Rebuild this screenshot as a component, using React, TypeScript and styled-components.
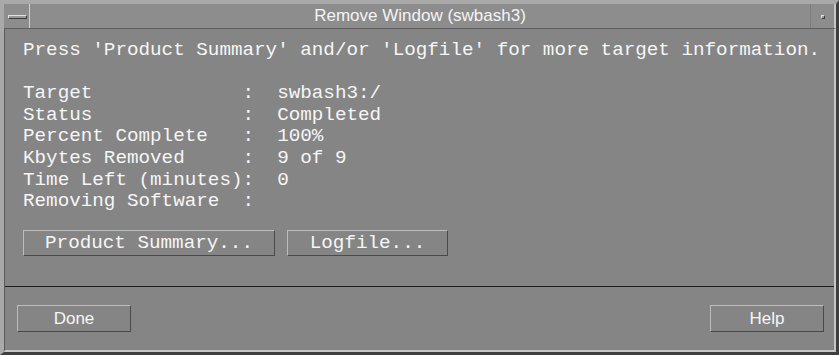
import React from "react";
import styled, { createGlobalStyle } from "styled-components";

const GlobalStyle = createGlobalStyle`
  html, body { margin: 0; padding: 0; background: #858585; }
  body { width: 839px; height: 355px; overflow: hidden; }
  * { -webkit-font-smoothing: none; }
`;

const Frame = styled.div`
  box-sizing: border-box;
  width: 839px;
  height: 355px;
  display: flex;
  flex-direction: column;
  border-style: solid;
  border-width: 4px 3px 3px 4px;
  border-color: #a9a9a9 #3e3e3e #3e3e3e #a9a9a9;
  background: #858585;
`;

const TitleBar = styled.div`
  flex: none;
  display: flex;
  height: 24px;
  background: #8d8d8d;
  border-right: 2px solid #c6c6c6;
  border-bottom: 1px solid #5e5e5e;
`;

const MenuButton = styled.div`
  width: 25px;
  border-right: 1px solid #d0d0d0;
  display: flex;
  align-items: center;
  justify-content: center;
  padding-top: 1px;
  box-sizing: content-box;
`;

const MenuBar = styled.div`
  box-sizing: border-box;
  width: 19px;
  height: 4px;
  margin-left: 1px;
  background: #9a9a9a;
  border-style: solid;
  border-width: 1px;
  border-color: #e2e2e2 #3c3c3c #3c3c3c #e2e2e2;
`;

const Title = styled.div`
  flex: 1;
  text-align: center;
  line-height: 24px;
  font-family: "Liberation Sans", Arial, sans-serif;
  font-size: 17px;
  color: #f4f4f4;
  white-space: nowrap;
`;

const MaxButton = styled.div`
  width: 23px;
  border-left: 1px solid #7c7c7c;
  display: flex;
  align-items: center;
  justify-content: center;
  padding-top: 1px;
`;

const MaxSquare = styled.div`
  box-sizing: border-box;
  width: 4px;
  height: 4px;
  margin-left: 1px;
  background: #9a9a9a;
  border-style: solid;
  border-width: 1px;
  border-color: #e2e2e2 #3c3c3c #3c3c3c #e2e2e2;
`;

const Client = styled.div`
  flex: 1;
  display: flex;
  flex-direction: column;
  border-left: 1px solid #5a5a5a;
  border-right: 2px solid #c6c6c6;
  border-bottom: 2px solid #c6c6c6;
`;

const Upper = styled.div`
  flex: 1;
  padding: 11px 0 0 18px;
  font-family: "Liberation Mono", "Courier New", monospace;
  font-size: 19.25px;
  line-height: 21.6px;
  color: #f6f6f6;
  white-space: pre;
`;

const Message = styled.div`
  margin-bottom: 21.6px;
`;

const InfoGrid = styled.div`
  display: grid;
  grid-template-columns: 19ch 3ch auto;
`;

const Cell = styled.span``;

const ButtonRow = styled.div`
  display: flex;
  gap: 12px;
  margin-top: 17px;
`;

const PushButton = styled.button<{ $width: number }>`
  box-sizing: border-box;
  width: ${(p) => p.$width}px;
  height: 26px;
  padding: 0;
  background: #858585;
  border-style: solid;
  border-width: 1px;
  border-color: #bdbdbd #4a4a4a #4a4a4a #bdbdbd;
  font-family: "Liberation Mono", "Courier New", monospace;
  font-size: 19.25px;
  color: #f6f6f6;
  white-space: pre;
  cursor: pointer;
`;

const Footer = styled.div`
  flex: none;
  display: flex;
  justify-content: space-between;
  padding: 18px 10px 18px 12px;
  border-top: 1px solid #1e1e1e;
`;

const ActionButton = styled.button`
  box-sizing: border-box;
  width: 114px;
  height: 27px;
  padding: 0;
  background: #858585;
  border-style: solid;
  border-width: 1px;
  border-color: #bdbdbd #4a4a4a #4a4a4a #bdbdbd;
  font-family: "Liberation Sans", Arial, sans-serif;
  font-size: 17px;
  color: #f6f6f6;
  cursor: pointer;
`;

const rows: [string, string][] = [
  ["Target", "swbash3:/"],
  ["Status", "Completed"],
  ["Percent Complete", "100%"],
  ["Kbytes Removed", "9 of 9"],
  ["Time Left (minutes)", "0"],
  ["Removing Software", ""],
];

export default function App() {
  return (
    <>
      <GlobalStyle />
      <Frame>
        <TitleBar>
          <MenuButton>
            <MenuBar />
          </MenuButton>
          <Title>Remove Window (swbash3)</Title>
          <MaxButton>
            <MaxSquare />
          </MaxButton>
        </TitleBar>
        <Client>
          <Upper>
            <Message>
              Press 'Product Summary' and/or 'Logfile' for more target information.
            </Message>
            <InfoGrid>
              {rows.map(([label, value]) => (
                <React.Fragment key={label}>
                  <Cell>{label}</Cell>
                  <Cell>:</Cell>
                  <Cell>{value}</Cell>
                </React.Fragment>
              ))}
            </InfoGrid>
            <ButtonRow>
              <PushButton $width={252}>Product Summary...</PushButton>
              <PushButton $width={161}>Logfile...</PushButton>
            </ButtonRow>
          </Upper>
          <Footer>
            <ActionButton>Done</ActionButton>
            <ActionButton>Help</ActionButton>
          </Footer>
        </Client>
      </Frame>
    </>
  );
}
